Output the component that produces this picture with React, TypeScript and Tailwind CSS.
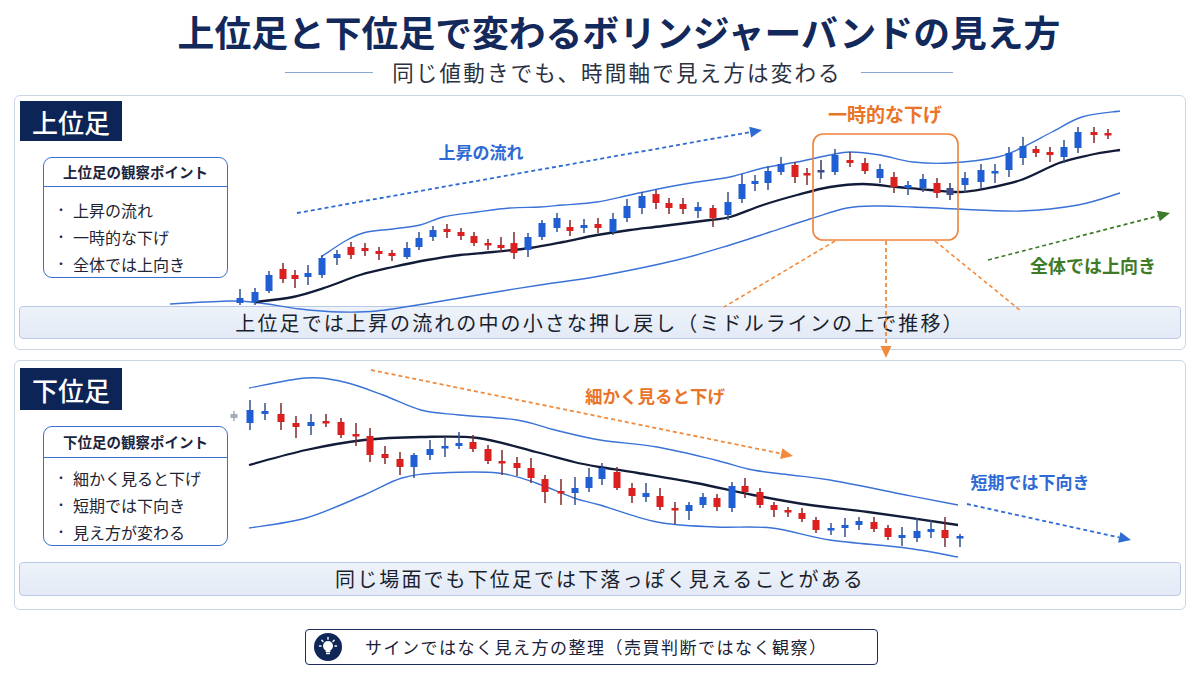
import React from 'react';

type Pt = [number, number];
type Candle = [number, number, number, number, number, string];

const JP = "'Noto Sans CJK JP', 'Noto Sans', sans-serif";

const topCandles: Candle[] = [
  [240, 298, 303, 289, 305, 'b'], [255, 292, 302, 288, 305, 'b'], [269, 275, 291, 271, 293, 'b'],
  [283, 269, 279, 263, 283, 'r'], [295, 275, 279, 270, 288, 'r'], [308, 273, 277, 265, 285, 'b'],
  [322, 258, 275, 255, 278, 'b'], [337, 254, 258, 250, 265, 'b'], [351, 247, 255, 242, 259, 'r'],
  [365, 248, 251, 243, 256, 'r'], [379, 251, 254, 247, 260, 'r'], [392, 253, 256, 250, 261, 'r'],
  [407, 248, 257, 242, 259, 'b'], [419, 238, 247, 232, 250, 'b'], [433, 230, 237, 226, 241, 'b'],
  [447, 229, 232, 224, 238, 'r'], [461, 232, 236, 228, 240, 'r'], [474, 236, 243, 232, 246, 'r'],
  [488, 243, 245, 239, 250, 'r'], [501, 245, 248, 237, 252, 'r'], [514, 243, 253, 232, 259, 'r'],
  [528, 237, 250, 233, 257, 'b'], [542, 223, 237, 220, 240, 'b'], [557, 218, 228, 213, 232, 'b'],
  [570, 227, 231, 220, 236, 'r'], [584, 225, 228, 219, 233, 'b'], [598, 224, 228, 218, 233, 'r'],
  [613, 219, 232, 213, 235, 'b'], [627, 206, 218, 199, 222, 'b'], [642, 196, 208, 192, 214, 'b'],
  [656, 194, 203, 190, 209, 'r'], [669, 203, 208, 198, 214, 'r'], [683, 204, 209, 198, 214, 'r'],
  [698, 207, 211, 202, 218, 'b'], [713, 208, 218, 205, 227, 'r'], [728, 202, 215, 192, 220, 'b'],
  [742, 184, 199, 174, 203, 'b'], [755, 181, 184, 175, 191, 'b'], [768, 171, 183, 166, 190, 'b'],
  [781, 164, 172, 157, 175, 'b'], [795, 165, 177, 162, 183, 'r'], [807, 173, 175, 168, 185, 'r'],
  [821, 170, 172, 160, 179, 'n'], [835, 155, 172, 149, 175, 'b'], [850, 160, 163, 152, 167, 'r'],
  [865, 163, 171, 158, 174, 'r'], [880, 169, 178, 164, 183, 'b'], [894, 177, 187, 172, 193, 'r'],
  [908, 185, 188, 181, 195, 'b'], [923, 179, 188, 174, 192, 'b'], [937, 183, 193, 178, 198, 'r'],
  [950, 188, 195, 183, 200, 'n'], [965, 178, 185, 172, 193, 'b'], [981, 170, 182, 164, 188, 'b'],
  [995, 171, 173, 164, 183, 'b'], [1009, 153, 170, 147, 177, 'b'], [1023, 146, 158, 137, 165, 'b'],
  [1036, 149, 153, 146, 157, 'r'], [1050, 152, 155, 147, 162, 'r'], [1064, 147, 157, 140, 163, 'b'],
  [1078, 132, 148, 127, 153, 'b'], [1094, 132, 135, 127, 143, 'r'], [1108, 133, 135, 129, 139, 'r'],
];

const bottomCandles: Candle[] = [
  [234, 414, 418, 411, 421, 'g'], [250, 410, 423, 400, 430, 'b'], [265, 411, 414, 403, 420, 'b'],
  [281, 414, 422, 403, 430, 'r'], [296, 423, 427, 416, 438, 'r'], [311, 422, 426, 414, 435, 'b'],
  [326, 421, 423, 414, 427, 'r'], [341, 422, 435, 418, 438, 'r'], [356, 434, 436, 423, 446, 'r'],
  [370, 436, 455, 428, 462, 'r'], [385, 454, 458, 446, 464, 'r'], [400, 459, 467, 452, 475, 'r'],
  [414, 455, 467, 453, 478, 'b'], [430, 449, 455, 440, 460, 'b'], [445, 446, 448, 438, 457, 'b'],
  [459, 443, 446, 432, 449, 'b'], [473, 442, 449, 435, 452, 'r'], [488, 449, 461, 445, 464, 'r'],
  [502, 461, 463, 450, 475, 'r'], [517, 463, 468, 457, 476, 'r'], [531, 468, 478, 458, 483, 'r'],
  [545, 479, 492, 475, 503, 'r'], [561, 491, 493, 479, 505, 'r'], [575, 488, 493, 477, 505, 'b'],
  [589, 477, 488, 468, 492, 'b'], [602, 468, 479, 463, 485, 'b'], [617, 472, 488, 467, 490, 'r'],
  [632, 488, 496, 483, 503, 'r'], [646, 493, 497, 483, 502, 'b'], [660, 496, 507, 488, 510, 'r'],
  [675, 508, 510, 502, 524, 'r'], [689, 505, 511, 502, 520, 'b'], [703, 497, 505, 493, 508, 'b'],
  [717, 498, 507, 494, 511, 'r'], [732, 486, 508, 482, 512, 'b'], [745, 486, 492, 478, 498, 'r'],
  [760, 492, 505, 488, 508, 'r'], [774, 505, 510, 502, 517, 'r'], [788, 510, 512, 507, 517, 'r'],
  [802, 513, 519, 508, 522, 'r'], [816, 520, 530, 517, 533, 'r'], [831, 528, 530, 523, 535, 'b'],
  [845, 525, 528, 518, 537, 'b'], [859, 521, 525, 517, 530, 'b'], [874, 522, 529, 517, 532, 'r'],
  [888, 528, 537, 525, 540, 'r'], [902, 535, 538, 527, 546, 'b'], [917, 531, 538, 518, 542, 'b'],
  [931, 529, 532, 520, 538, 'b'], [945, 530, 538, 517, 547, 'r'], [960, 536, 537, 534, 547, 'b'],
];

const topUpper: Pt[] = [[321, 257], [347, 240], [367, 232], [393, 229], [420, 225], [443, 217], [477, 212], [510, 208], [540, 207], [563, 205], [597, 202], [630, 195], [663, 188], [697, 182], [730, 177], [763, 168], [797, 162], [830, 155], [850, 152], [880, 155], [913, 162], [950, 163], [998, 157], [1021, 148], [1052, 132], [1082, 117], [1120, 111]];
const topMiddle: Pt[] = [[255, 302], [293, 297], [327, 287], [360, 275], [393, 267], [427, 260], [460, 255], [493, 252], [530, 248], [563, 242], [597, 235], [630, 230], [663, 226], [710, 220], [730, 217], [763, 205], [797, 195], [830, 187], [863, 184], [897, 187], [930, 190], [960, 192], [983, 189], [1021, 180], [1059, 163], [1090, 155], [1120, 150]];
const topLower: Pt[] = [[170, 304], [230, 301], [260, 303], [300, 309], [340, 312], [377, 311], [430, 303], [490, 293], [540, 285], [600, 276], [677, 260], [730, 245], [770, 232], [810, 219], [847, 208], [880, 206], [913, 207], [956, 209], [1021, 211], [1078, 205], [1120, 193]];

const botUpper: Pt[] = [[249, 388], [306, 378], [344, 382], [383, 395], [421, 410], [459, 415], [517, 420], [555, 430], [600, 440], [657, 447], [715, 460], [753, 470], [791, 475], [830, 480], [906, 495], [958, 505]];
const botMiddle: Pt[] = [[249, 465], [306, 450], [364, 440], [421, 437], [478, 438], [536, 452], [574, 462], [600, 467], [638, 473], [696, 483], [753, 495], [810, 505], [868, 512], [958, 525]];
const botLower: Pt[] = [[249, 528], [306, 518], [364, 495], [402, 478], [440, 473], [498, 473], [536, 483], [574, 498], [600, 505], [657, 522], [715, 527], [772, 528], [830, 540], [906, 548], [958, 557]];

function smooth(pts: Pt[]) {
  let d = `M${pts[0][0]},${pts[0][1]}`;
  for (let i = 0; i < pts.length - 1; i++) {
    const p0 = pts[i - 1] || pts[i];
    const p1 = pts[i];
    const p2 = pts[i + 1];
    const p3 = pts[i + 2] || p2;
    const c1x = p1[0] + (p2[0] - p0[0]) / 6;
    const c1y = p1[1] + (p2[1] - p0[1]) / 6;
    const c2x = p2[0] - (p3[0] - p1[0]) / 6;
    const c2y = p2[1] - (p3[1] - p1[1]) / 6;
    d += ` C${c1x.toFixed(1)},${c1y.toFixed(1)} ${c2x.toFixed(1)},${c2y.toFixed(1)} ${p2[0]},${p2[1]}`;
  }
  return d;
}

const bodyColor: Record<string, string> = { b: '#1f5fd3', r: '#dc1f1f', n: '#3f4a8e', g: '#a3abbc' };
const wickColor: Record<string, string> = { b: '#34508c', r: '#7d2a2a', n: '#333b6b', g: '#a3abbc' };

function Candles({ data }: { data: Candle[] }) {
  return (
    <g>
      {data.map(([x, bt, bb, wt, wb, c], i) => (
        <g key={i}>
          <line x1={x} y1={wt} x2={x} y2={wb} stroke={wickColor[c]} strokeWidth={1.5} />
          <rect x={x - 3.5} y={bt} width={7} height={Math.max(bb - bt, 2.5)} fill={bodyColor[c]} />
        </g>
      ))}
    </g>
  );
}

function Arrow({ x1, y1, x2, y2, color }: { x1: number; y1: number; x2: number; y2: number; color: string }) {
  const a = Math.atan2(y2 - y1, x2 - x1);
  const len = 12;
  const hw = 5.5;
  const bx = x2 - Math.cos(a) * len;
  const by = y2 - Math.sin(a) * len;
  const px = -Math.sin(a) * hw;
  const py = Math.cos(a) * hw;
  return (
    <g>
      <line x1={x1} y1={y1} x2={bx} y2={by} stroke={color} strokeWidth={1.8} strokeDasharray="4 3" />
      <polygon points={`${x2},${y2} ${bx + px},${by + py} ${bx - px},${by - py}`} fill={color} />
    </g>
  );
}

function Bands({ upper, middle, lower }: { upper: Pt[]; middle: Pt[]; lower: Pt[] }) {
  return (
    <g fill="none">
      <path d={smooth(upper)} stroke="#3a72d8" strokeWidth={1.4} />
      <path d={smooth(lower)} stroke="#3a72d8" strokeWidth={1.4} />
      <path d={smooth(middle)} stroke="#121c38" strokeWidth={2.3} />
    </g>
  );
}

function PointBox({ title, items, headH, padTop }: { title: string; items: string[]; headH: string; padTop: string }) {
  return (
    <div className="ml-[28px] w-[185px] rounded-[9px] border-[1.5px] border-[#3c6fd4] bg-white">
      <div className={`${headH} flex items-center justify-center border-b-[1.5px] border-[#3c6fd4] text-[14.5px] font-bold text-[#1b2540]`}>
        {title}
      </div>
      <ul className={`${padTop} pl-[11px] text-[16px] text-[#1e2433]`}>
        {items.map((t) => (
          <li key={t} className="flex h-[27px] items-center">
            <span className="w-[18px] text-[12px]">・</span>
            <span>{t}</span>
          </li>
        ))}
      </ul>
    </div>
  );
}

function Summary({ text, h }: { text: string; h: string }) {
  return (
    <div className={`${h} mx-[4px] flex items-center justify-center rounded-[4px] border border-[#b8c8e6] bg-gradient-to-b from-[#eef3fa] to-[#e3eaf6] text-[20px] tracking-[2.1px] text-[#1a1f2e]`}>
      {text}
    </div>
  );
}

function Bulb() {
  return (
    <svg width="28" height="28" viewBox="0 0 28 28">
      <circle cx="14" cy="14" r="14" fill="#0f2656" />
      <circle cx="14" cy="13" r="5" fill="#fff" />
      <rect x="11.6" y="16" width="4.8" height="3" fill="#fff" />
      <rect x="12" y="19.6" width="4" height="1.6" rx="0.6" fill="#fff" />
      <g stroke="#fff" strokeWidth="1.4" strokeLinecap="round">
        <line x1="14" y1="4.5" x2="14" y2="6.3" />
        <line x1="7.8" y1="7.2" x2="9" y2="8.4" />
        <line x1="20.2" y1="7.2" x2="19" y2="8.4" />
        <line x1="5.5" y1="13" x2="7" y2="13" />
        <line x1="21" y1="13" x2="22.5" y2="13" />
      </g>
    </svg>
  );
}

export default function App() {
  return (
    <div className="flex h-[675px] w-[1200px] flex-col overflow-hidden bg-white font-['Noto_Sans_CJK_JP','Noto_Sans',sans-serif]">
      {/* Title */}
      <h1 className="mt-[8px] h-[46px] pl-[38px] text-center text-[36.8px] font-bold leading-[46px] text-[#13295b]">
        上位足と下位足で変わるボリンジャーバンドの見え方
      </h1>
      <div className="mt-[4px] flex h-[28px] items-center justify-center pl-[38px]">
        <div className="h-px w-[88px] bg-[#8ba6d6]" />
        <div className="mx-[19px] text-[21.5px] leading-[28px] tracking-[2.2px] text-[#2b3142]">同じ値動きでも、時間軸で見え方は変わる</div>
        <div className="h-px w-[92px] bg-[#8ba6d6]" />
      </div>

      {/* Upper timeframe */}
      <section className="relative mx-[14px] mt-[9px] flex h-[255px] flex-col rounded-[6px] border border-[#cbd5e6]">
        <div className="ml-[5px] mt-[5px] flex h-[40px] w-[102px] items-center justify-center bg-[#0c2456] text-[26px] font-medium text-white">
          上位足
        </div>
        <div className="mt-[16px]">
          <PointBox title="上位足の観察ポイント" items={['上昇の流れ', '一時的な下げ', '全体では上向き']} headH="h-[29px]" padTop="pt-[9px]" />
        </div>
        <div className="mt-[28px]">
          <Summary h="h-[33px]" text="上位足では上昇の流れの中の小さな押し戻し（ミドルラインの上で推移）" />
        </div>
        <svg className="pointer-events-none absolute inset-0 h-full w-full overflow-visible" viewBox="15 96 1170 253">
          <Bands upper={topUpper} middle={topMiddle} lower={topLower} />
          <Candles data={topCandles} />
          <Arrow x1={297} y1={213} x2={762} y2={130} color="#2e6bd2" />
          <Arrow x1={988} y1={260} x2={1170} y2={213} color="#3d7a28" />
          <rect x={813} y={134} width={145} height={106} rx={10} fill="none" stroke="#ef8339" strokeWidth={1.6} />
          <line x1={835} y1={241} x2={724} y2={307} stroke="#f08a3c" strokeWidth={1.6} strokeDasharray="4 3" />
          <line x1={935} y1={241} x2={1021} y2={311} stroke="#f08a3c" strokeWidth={1.6} strokeDasharray="4 3" />
          <Arrow x1={886} y1={241} x2={886} y2={358} color="#f08a3c" />
          <text x={481} y={159} textAnchor="middle" fontFamily={JP} fontSize={17} fontWeight={700} fill="#2e6ad4">上昇の流れ</text>
          <text x={885} y={122} textAnchor="middle" fontFamily={JP} fontSize={19} fontWeight={700} fill="#ea7428">一時的な下げ</text>
          <text x={1093} y={273} textAnchor="middle" fontFamily={JP} fontSize={18} fontWeight={700} fill="#3f7a26">全体では上向き</text>
        </svg>
      </section>

      {/* Lower timeframe */}
      <section className="relative mx-[14px] mt-[10px] flex h-[250px] flex-col rounded-[6px] border border-[#cbd5e6]">
        <div className="ml-[5px] mt-[7px] flex h-[42px] w-[102px] items-center justify-center bg-[#0c2456] text-[26px] font-medium text-white">
          下位足
        </div>
        <div className="mt-[16px]">
          <PointBox title="下位足の観察ポイント" items={['細かく見ると下げ', '短期では下向き', '見え方が変わる']} headH="h-[31px]" padTop="pt-[6px]" />
        </div>
        <div className="mt-[16px]">
          <Summary h="h-[34px]" text="同じ場面でも下位足では下落っぽく見えることがある" />
        </div>
        <svg className="pointer-events-none absolute inset-0 h-full w-full overflow-visible" viewBox="15 361 1170 248">
          <Bands upper={botUpper} middle={botMiddle} lower={botLower} />
          <Candles data={bottomCandles} />
          <Arrow x1={371} y1={370} x2={793} y2={456} color="#f08a3c" />
          <Arrow x1={967} y1={504} x2={1131} y2={540} color="#2e6bd2" />
          <text x={655} y={403} textAnchor="middle" fontFamily={JP} fontSize={17.5} fontWeight={700} fill="#ea7428">細かく見ると下げ</text>
          <text x={1030} y={489} textAnchor="middle" fontFamily={JP} fontSize={17} fontWeight={700} fill="#2e6ad4">短期では下向き</text>
        </svg>
      </section>

      {/* Footer note */}
      <div className="ml-[305px] mt-[19px] flex h-[36px] w-[573px] items-center rounded-[4px] border-[1.5px] border-[#1a2d5c] pl-[8px]">
        <Bulb />
        <span className="ml-[23px] text-[17px] tracking-[1.5px] text-[#1a2135]">サインではなく見え方の整理（売買判断ではなく観察）</span>
      </div>
    </div>
  );
}
